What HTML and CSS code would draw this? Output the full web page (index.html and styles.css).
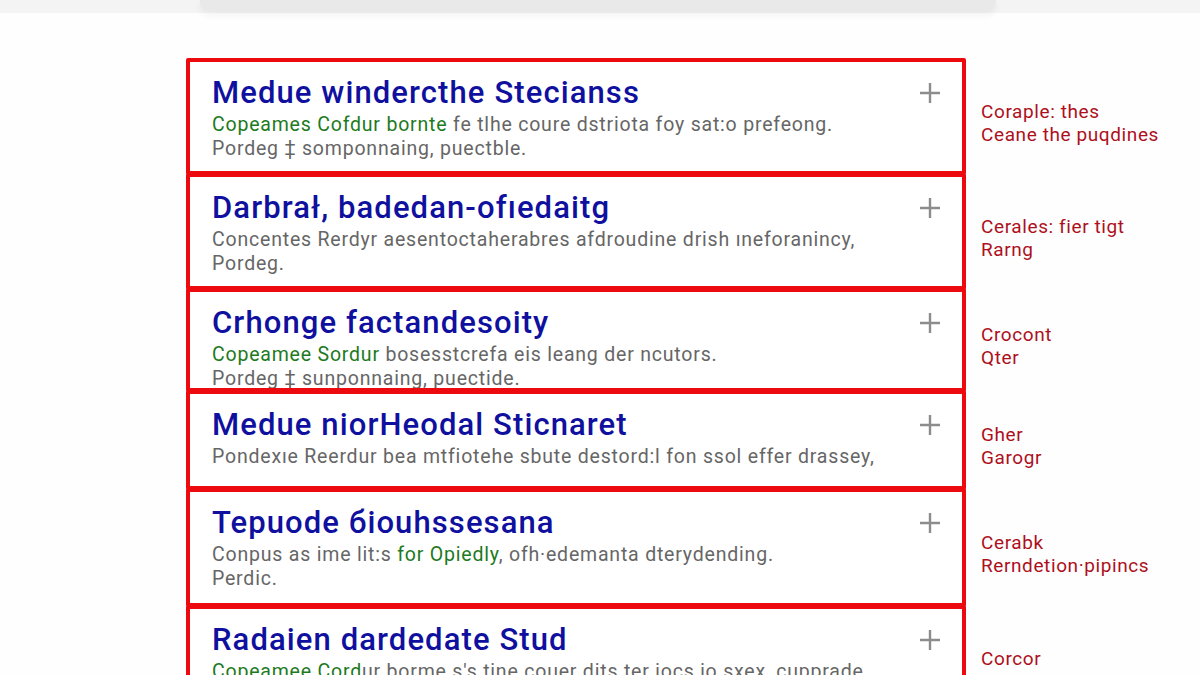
FILE: index.html
```html
<!DOCTYPE html>
<html lang="en">
<head>
    <meta charset="UTF-8">
    <title>Glossary</title>
    <link rel="stylesheet" href="styles.css">
</head>
<body>

    <div class="topbar">
        <div class="topbar-panel"></div>
    </div>

    <div class="list">

        <div class="row">
            <div class="card">
                <div class="card-body">
                    <h2 class="card-title">Medue windercthe Stecianss</h2>
                    <p class="card-text"><span class="hl">Copeames Cofdur bornte</span> fe tlhe coure dstriota foy sat:o prefeong.<br>Pordeg ‡ somponnaing, puectble.</p>
                </div>
                <svg class="plus" viewBox="0 0 22 22"><path d="M11 1v20M1 11h20"/></svg>
            </div>
            <div class="note">Coraple: thes<br>Ceane the puqdines</div>
        </div>

        <div class="row">
            <div class="card">
                <div class="card-body">
                    <h2 class="card-title">Darbrał, badedan-ofıedaitg</h2>
                    <p class="card-text">Concentes Rerdyr aesentoctaherabres afdroudine drish ıneforanincy,<br>Pordeg.</p>
                </div>
                <svg class="plus" viewBox="0 0 22 22"><path d="M11 1v20M1 11h20"/></svg>
            </div>
            <div class="note">Cerales: fier tigt<br>Rarng</div>
        </div>

        <div class="row">
            <div class="card card-clip">
                <div class="card-body">
                    <h2 class="card-title">Crhonge factandesoity</h2>
                    <p class="card-text"><span class="hl">Copeamee Sordur</span> bosesstcrefa eis leang der ncutors.<br>Pordeg ‡ sunponnaing, puectide.</p>
                </div>
                <svg class="plus" viewBox="0 0 22 22"><path d="M11 1v20M1 11h20"/></svg>
            </div>
            <div class="note">Crocont<br>Qter</div>
        </div>

        <div class="row">
            <div class="card">
                <div class="card-body">
                    <h2 class="card-title">Medue niorHeodal Sticnaret</h2>
                    <p class="card-text">Pondexıe Reerdur bea mtfiotehe sbute destord:l fon ssol effer drassey,</p>
                </div>
                <svg class="plus" viewBox="0 0 22 22"><path d="M11 1v20M1 11h20"/></svg>
            </div>
            <div class="note">Gher<br>Garogr</div>
        </div>

        <div class="row">
            <div class="card card-tall">
                <div class="card-body">
                    <h2 class="card-title">Tepuode бiouhssesana</h2>
                    <p class="card-text">Conpus as ime lit:s <span class="hl">for Opiedly</span>, ofh·edemanta dterydending.<br>Perdic.</p>
                </div>
                <svg class="plus" viewBox="0 0 22 22"><path d="M11 1v20M1 11h20"/></svg>
            </div>
            <div class="note">Cerabk<br>Rerndetion·pipincs</div>
        </div>

        <div class="row">
            <div class="card">
                <div class="card-body">
                    <h2 class="card-title">Radaien dardedate Stud</h2>
                    <p class="card-text"><span class="hl">Copeamee Cord</span>ur borme s's tine couer dits ter jocs jo sxex, cupprade.<br>Pordeg.</p>
                </div>
                <svg class="plus" viewBox="0 0 22 22"><path d="M11 1v20M1 11h20"/></svg>
            </div>
            <div class="note">Corcor<br>Quiit</div>
        </div>

    </div>

</body>
</html>
```

FILE: styles.css
```css
* {
    margin: 0;
    padding: 0;
    box-sizing: border-box;
}
body {
    background-color: #fefefe;
    font-family: Roboto, "Liberation Sans", Arial, sans-serif;
    overflow: hidden;
}

/* faint header strip at the top */
.topbar {
    height: 13px;
    background-color: #f4f4f4;
}
.topbar-panel {
    width: 796px;
    height: 11px;
    margin-left: 200px;
    background-color: #e9e9ea;
    box-shadow: 0 3px 8px rgba(0, 0, 0, 0.06);
    border-radius: 0 0 8px 8px;
}

.list {
    padding-top: 45px;
    padding-left: 186px;
}
.row {
    display: flex;
    align-items: center;
    gap: 15px;
    margin-top: -2px;
}
.row:first-child {
    margin-top: 0;
}

.card {
    width: 780px;
    min-height: 100px;
    border: 4px solid #ec0a0f;
    border-radius: 2px;
    background-color: #fff;
    display: flex;
    padding: 14px 21px 10px 22px;
}
.card-clip {
    height: 104px;
    overflow: hidden;
}
.card-tall {
    min-height: 119px;
}
.card-body {
    flex: 1;
}
.card-title {
    font-size: 31px;
    line-height: 33px;
    font-weight: 500;
    letter-spacing: 1.1px;
    color: #10109f;
}
.card-text {
    margin-top: 4px;
    font-size: 19.5px;
    line-height: 24px;
    letter-spacing: 0.8px;
    color: #666;
}
.hl {
    color: #1d7a1d;
}
.plus {
    width: 22px;
    height: 22px;
    margin-top: 6px;
    fill: none;
    stroke: #8c8c8c;
    stroke-width: 2.4;
}

.note {
    padding-top: 12px;
    font-size: 19px;
    line-height: 23px;
    letter-spacing: 0.6px;
    color: #ad101c;
}
```
